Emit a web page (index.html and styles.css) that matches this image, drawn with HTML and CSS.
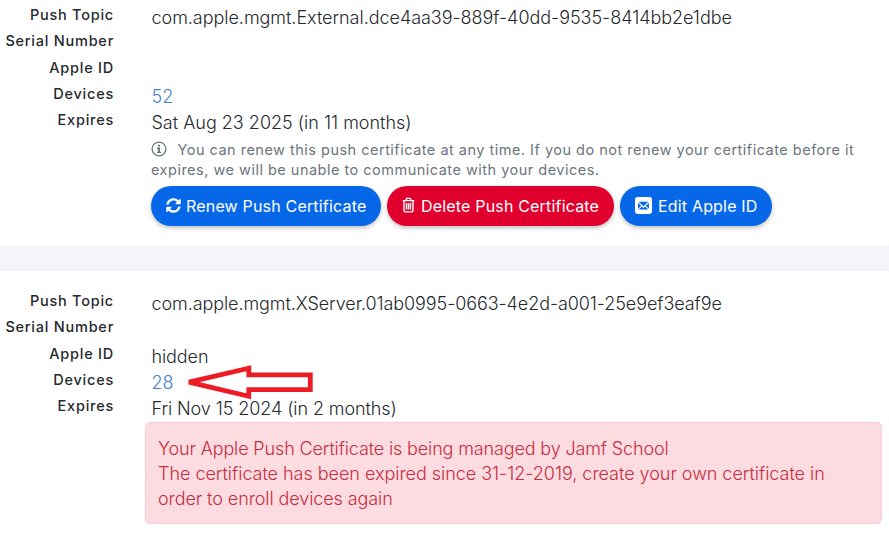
FILE: index.html
```html
<!DOCTYPE html>
<html lang="en">
<head>
<meta charset="utf-8">
<title>Push Certificates</title>
<link rel="stylesheet" href="styles.css">
</head>
<body>
<main class="page">
  <section class="panel panel-first">
    <dl class="details">
      <dt>Push Topic</dt><dd><span class="topic-external">com.apple.mgmt.External.dce4aa39-889f-40dd-9535-8414bb2e1dbe</span></dd>
      <dt>Serial Number</dt><dd></dd>
      <dt>Apple ID</dt><dd></dd>
      <dt>Devices</dt><dd><a class="count">52</a></dd>
      <dt>Expires</dt><dd>Sat Aug 23 2025 (in 11 months)</dd>
    </dl>
    <div class="content">
      <p class="hint"><svg class="info" viewBox="0 0 16 16"><circle cx="8" cy="8" r="6.9" fill="none" stroke="currentColor" stroke-width="1.3"/><path d="M7 3.7h2v1.8H7zM6 6.6h3v4.1h1.1V12H6v-1.3h1.1V7.9H6z" fill="currentColor"/></svg>You can renew this push certificate at any time. If you do not renew your certificate before it<br>expires, we will be unable to communicate with your devices.</p>
      <div class="actions">
        <button class="btn btn-renew"><svg class="icon-sync" viewBox="0 0 512 512"><path fill="currentColor" d="M370.72 133.28C339.458 104.008 298.888 87.962 255.848 88c-77.458.068-144.328 53.178-162.791 126.85-1.344 5.363-6.122 9.15-11.651 9.15H24.103c-7.498 0-13.194-6.807-11.807-14.176C33.933 94.924 134.813 8 256 8c66.448 0 126.791 26.136 171.315 68.685L463.03 40.97C478.149 25.851 504 36.559 504 57.941V192c0 13.255-10.745 24-24 24H345.941c-21.382 0-32.09-25.851-16.971-40.971l41.75-41.749zM32 296h134.059c21.382 0 32.09 25.851 16.971 40.971l-41.75 41.75c31.262 29.273 71.835 45.319 114.876 45.28 77.418-.07 144.315-53.144 162.787-126.849 1.344-5.363 6.122-9.15 11.651-9.15h57.304c7.498 0 13.194 6.807 11.807 14.176C478.067 417.076 377.187 504 256 504c-66.448 0-126.791-26.136-171.315-68.685L48.97 471.03C33.851 486.149 8 475.441 8 454.059V320c0-13.255 10.745-24 24-24z"/></svg><span>Renew Push Certificate</span></button>
        <button class="btn btn-delete"><svg class="icon-trash" viewBox="0 0 13 16"><path d="M.7 3.6h11.6M4 3.4l.7-2h3.6l.7 2M2 3.8v9.7q0 1.4 1.3 1.4h6.4q1.3 0 1.3-1.4V3.8M4.5 6v6.5M6.5 6v6.5M8.5 6v6.5" fill="none" stroke="currentColor" stroke-width="1.4"/></svg><span>Delete Push Certificate</span></button>
        <button class="btn btn-edit"><svg class="icon-mail" viewBox="0 0 17 17"><rect width="17" height="17" rx="2.4" fill="currentColor"/><path d="M3.6 4.7h9.8L8.5 9.2zM3.1 5.7l3 3-3 3zM13.9 5.7l-3 3 3 3zM3.7 12.4l3.1-3 1.7 1.5 1.7-1.5 3.1 3z" fill="#0668e8"/></svg><span>Edit Apple ID</span></button>
      </div>
    </div>
  </section>
  <section class="panel panel-second">
    <dl class="details">
      <dt>Push Topic</dt><dd><span class="topic-server">com.apple.mgmt.XServer.01ab0995-0663-4e2d-a001-25e9ef3eaf9e</span></dd>
      <dt>Serial Number</dt><dd></dd>
      <dt>Apple ID</dt><dd><span class="tight">hidden</span></dd>
      <dt>Devices</dt><dd class="marked"><a class="count">28</a><svg class="arrow" viewBox="0 0 128 36"><path d="M4 17.200 63.800 3.200v6.600h61.500v14.900H63.800v6.600z" fill="#fff" stroke="#ed1c24" stroke-width="4.800"/></svg></dd>
      <dt>Expires</dt><dd><span class="tight">Fri Nov 15 2024 (in 2 months)</span></dd>
    </dl>
    <div class="alert"><span class="managed">Your Apple Push Certificate is being managed by Jamf School</span><br><span class="expired">The certificate has been expired since 31-12-2019, create your own certificate in</span><br><span class="tight">order to enroll devices again</span></div>
  </section>
</main>
</body>
</html>
```
FILE: styles.css
```css
* { box-sizing: border-box; }
body {
  margin: 0;
  overflow: hidden;
  background: #f4f5fa;
  font-family: Inter, sans-serif;
  font-weight: 300;
  color: #262a2e;
}
.page {
  display: flex;
  flex-direction: column;
  gap: 25px;
  width: 893px;
}
.panel { background: #fff; border-radius: 0 8px 8px 0; }
.panel-first { height: 246px; border-top-right-radius: 0; padding-top: 2px; }
.panel-second { height: 270px; padding-top: 17px; }
.details {
  display: grid;
  grid-template-columns: 114px 1fr;
  column-gap: 37.5px;
  grid-auto-rows: 26.25px;
  margin: 0;
}
dt {
  font-size: 14.5px;
  font-weight: 550;
  line-height: 26px;
  letter-spacing: .76px;
  text-align: right;
  white-space: nowrap;
}
dd {
  margin: 0;
  padding-top: 3px;
  font-size: 18px;
  line-height: 26px;
  white-space: nowrap;
}
.topic-external { letter-spacing: -.04px; }
.topic-server { letter-spacing: -.085px; }
.tight { letter-spacing: -.09px; }
.count { color: #4a80d4; }
.content { padding-left: 151px; }
.hint {
  margin: 7px 0 6px;
  font-size: 14.5px;
  font-weight: 400;
  line-height: 20px;
  letter-spacing: .49px;
  color: #6c757d;
  white-space: nowrap;
}
.info { width: 16px; height: 16px; margin-right: 10.5px; vertical-align: -2px; }
.actions { display: flex; gap: 6px; }
.btn {
  display: flex;
  align-items: center;
  height: 40px;
  padding: 0 0 0 15px;
  border: 0;
  border-radius: 20px;
  background: #0668e8;
  color: #fff;
  font: 400 16px/24px Inter, sans-serif;
  letter-spacing: .18px;
  white-space: nowrap;
  box-shadow: 0 2px 4px rgba(0, 0, 0, .25);
}
.btn-renew { width: 230px; gap: 5px; }
.btn-delete { width: 227px; gap: 6px; background: #e1002d; }
.btn-edit { width: 152px; gap: 6px; }
.icon-sync { width: 15px; height: 15px; margin-bottom: 2px; }
.icon-trash { width: 13px; height: 16px; margin-bottom: 2px; }
.icon-mail { width: 17px; height: 17px; margin-bottom: 1px; }
.marked { position: relative; }
.arrow {
  position: absolute;
  left: 33px;
  top: -2px;
  width: 128px;
  height: 36px;
}
.alert {
  margin: 3px 0 0 145px;
  width: 737px;
  height: 102px;
  padding: 13px 12px;
  border: 1px solid #f9cdd3;
  border-radius: 5px;
  background: #fcdce0;
  color: #c72c41;
  font-size: 18px;
  line-height: 25px;
  white-space: nowrap;
}
.managed { letter-spacing: -.14px; }
.expired { letter-spacing: -.035px; }
```
